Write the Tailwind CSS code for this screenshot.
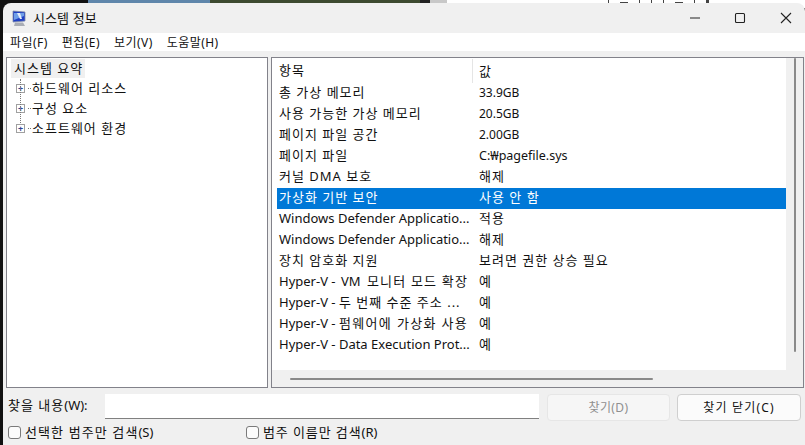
<!DOCTYPE html>
<html lang="ko"><head><meta charset="utf-8">
<script src="https://cdn.jsdelivr.net/npm/@tailwindcss/browser@4"></script>
</head>
<body class="relative w-[805px] h-[445px] overflow-hidden bg-[#111] font-['Noto_Sans','Noto_Sans_CJK_KR',sans-serif] text-[13px] leading-[19px] text-[#111]">
<!-- desktop behind the window -->
<div class="absolute left-0 top-0 w-[805px] h-[8px] flex overflow-hidden">
  <div class="w-[88px] bg-[#111]"></div><div class="w-[122px] bg-[#5f86ab]"></div><div class="w-[210px] bg-[#3d4a30]"></div><div class="w-[10px] bg-[#222]"></div><div class="w-[17px] bg-[#c8c8c8]"></div><div class="flex-1 bg-white"></div>
  <div class="absolute left-[608px] top-0 h-[3px] w-[140px] flex gap-[11px]">
    <i class="w-[1px] bg-[#444]"></i><i class="w-[8px] h-[1px] mt-[2px] bg-[#444]"></i><i class="w-[1px] bg-[#444]"></i><i class="w-[1px] bg-[#444]"></i><i class="w-[1px] bg-[#444]"></i><i class="w-[8px] h-[1px] mt-[2px] bg-[#444]"></i><i class="w-[1px] bg-[#444]"></i><i class="w-[3px] bg-[#444]"></i>
  </div>
</div>
<div class="relative ml-[3px] mt-[3px] h-[442px] w-[802px] rounded-t-[8px] bg-[#f0f0f0] flex flex-col overflow-hidden">
  <!-- title bar -->
  <div class="h-[30px] shrink-0 flex items-center">
    <svg class="ml-[9px] w-[15px] h-[17px]" viewBox="0 0 15 17"><path d="M1 1l12 1v9l-12 1z" fill="#1f3fc4" stroke="#7f8aa8" stroke-width=".8"/><path d="M2 3h10v3l-10 4z" fill="#6f9ee8"/><path d="M5 3l3 6h2l-2-6z" fill="#e4ecfa"/><path d="M3 12.5h8l2 3.5H2z" fill="#a9adb5"/></svg>
    <span class="ml-[6px] tracking-[.1px]">시스템 정보</span>
    <div class="ml-auto flex items-center">
      <svg class="w-[12px] h-[12px] mr-[33px]" viewBox="0 0 12 12"><path d="M1 6h10" stroke="#222" stroke-width="1.2"/></svg>
      <svg class="w-[12px] h-[12px] mr-[34px]" viewBox="0 0 12 12"><rect x="1.5" y="1.5" width="9" height="9" rx="1" fill="none" stroke="#222" stroke-width="1.1"/></svg>
      <svg class="w-[12px] h-[12px] mr-[13px]" viewBox="0 0 12 12"><path d="M1 1l10 10M11 1L1 11" stroke="#222" stroke-width="1.1"/></svg>
    </div>
  </div>
  <!-- menu -->
  <div class="h-[18px] shrink-0 bg-white flex items-center pl-[7px] gap-[14px] text-[12px] tracking-[.45px]">
    <span>파일(F)</span><span>편집(E)</span><span>보기(V)</span><span>도움말(H)</span>
  </div>
  <!-- panes -->
  <div class="mt-[6px] ml-[3px] flex gap-[3px] h-[331px] shrink-0">
    <div class="w-[262px] border border-[#82828a] bg-white relative tracking-[1px]">
      <div class="ml-[4px] mt-[1px] w-[74px] h-[19px] bg-[#f0f0f0] flex items-center pl-[3px] leading-none whitespace-nowrap">시스템 요약</div>
      <div class="flex flex-col">
        <div class="h-[20px] flex items-center"><span class="ml-[9px] w-[9px] h-[9px] border border-[#a0a0a0] text-[#30408f] text-[9px] leading-[7px] text-center font-bold tracking-normal">+</span><span class="ml-[3px] w-[3px] border-t border-dotted border-[#777]"></span><span class="ml-[1px]">하드웨어 리소스</span></div>
        <div class="h-[20px] flex items-center"><span class="ml-[9px] w-[9px] h-[9px] border border-[#a0a0a0] text-[#30408f] text-[9px] leading-[7px] text-center font-bold tracking-normal">+</span><span class="ml-[3px] w-[3px] border-t border-dotted border-[#777]"></span><span class="ml-[1px]">구성 요소</span></div>
        <div class="h-[20px] flex items-center"><span class="ml-[9px] w-[9px] h-[9px] border border-[#a0a0a0] text-[#30408f] text-[9px] leading-[7px] text-center font-bold tracking-normal">+</span><span class="ml-[3px] w-[3px] border-t border-dotted border-[#777]"></span><span class="ml-[1px]">소프트웨어 환경</span></div>
      </div>
      <span class="absolute left-[13px] top-[21px] h-[44px] border-l border-dotted border-[#777]"></span>
    </div>
    <div class="w-[533px] border border-[#82828a] bg-[#f0f0f0] flex flex-col">
      <div class="flex h-[312px]">
        <div class="w-[514px] bg-white pl-[5px]">
          <div class="h-[25px] flex items-center">
            <span class="w-[195px] pl-[2px] tracking-[1px]">항목</span>
            <span class="h-[24px] border-l border-[#e5e5e5] pl-[6px] leading-[24px]">값</span>
          </div>
          <div class="flex flex-col">
            <div class="h-[21px] flex"><span class="w-[202px] pl-[2px] whitespace-nowrap tracking-[1px]">총 가상 메모리</span><span class="text-[12px]">33.9GB</span></div>
            <div class="h-[21px] flex"><span class="w-[202px] pl-[2px] whitespace-nowrap tracking-[1px]">사용 가능한 가상 메모리</span><span class="text-[12px]">20.5GB</span></div>
            <div class="h-[21px] flex"><span class="w-[202px] pl-[2px] whitespace-nowrap tracking-[1px]">페이지 파일 공간</span><span class="text-[12px]">2.00GB</span></div>
            <div class="h-[21px] flex"><span class="w-[202px] pl-[2px] whitespace-nowrap tracking-[1px]">페이지 파일</span><span class="text-[12.5px]">C:₩pagefile.sys</span></div>
            <div class="h-[21px] flex"><span class="w-[202px] pl-[2px] whitespace-nowrap tracking-[1px]">커널 DMA 보호</span><span class="tracking-[1px]">해제</span></div>
            <div class="h-[21px] flex bg-[#0078d7] text-white tracking-[1px]"><span class="w-[202px] pl-[2px] whitespace-nowrap">가상화 기반 보안</span><span>사용 안 함</span></div>
            <div class="h-[21px] flex"><span class="w-[202px] pl-[2px] whitespace-nowrap">Windows Defender Applicatio...</span><span class="tracking-[1px]">적용</span></div>
            <div class="h-[21px] flex"><span class="w-[202px] pl-[2px] whitespace-nowrap">Windows Defender Applicatio...</span><span class="tracking-[1px]">해제</span></div>
            <div class="h-[21px] flex"><span class="w-[202px] pl-[2px] whitespace-nowrap tracking-[1px]">장치 암호화 지원</span><span class="tracking-[1px]">보려면 권한 상승 필요</span></div>
            <div class="h-[21px] flex"><span class="w-[202px] pl-[2px] whitespace-nowrap">Hyper-V - <span class="ml-[2px]">VM</span> <span class="ml-[3px] tracking-[1.2px]">모니터 모드 확장</span></span><span>예</span></div>
            <div class="h-[21px] flex"><span class="w-[202px] pl-[2px] whitespace-nowrap">Hyper-V - <span class="tracking-[1px]">두 번째 수준 주소 ...</span></span><span>예</span></div>
            <div class="h-[21px] flex"><span class="w-[202px] pl-[2px] whitespace-nowrap">Hyper-V - <span class="tracking-[1.35px]">펌웨어에 가상화 사용</span></span><span>예</span></div>
            <div class="h-[21px] flex"><span class="w-[202px] pl-[2px] whitespace-nowrap">Hyper-V - Data Execution Prot...</span><span>예</span></div>
          </div>
        </div>
        <div class="flex-1 flex justify-center"><div class="w-[2px] h-[294px] bg-[#8a8a8a] rounded-full"></div></div>
      </div>
      <div class="flex-1 flex items-center pl-[18px]"><div class="w-[363px] h-[2px] bg-[#8a8a8a] rounded-full"></div></div>
    </div>
  </div>
  <!-- search -->
  <div class="mt-[5px] ml-[5px] flex items-center h-[29px] shrink-0">
    <span class="w-[97px] whitespace-nowrap -mt-[5px]"><span class="tracking-[1px]">찾을 내용</span>(W):</span>
    <div class="w-[434px] h-[25px] -mt-[2px] bg-white border-b border-[#808080]"></div>
    <div class="ml-[8px] w-[123px] h-[27px] rounded-[4px] bg-[#f6f6f6] border border-[#e6e6e6] text-[#8f8f8f] text-[12px] flex items-center justify-center tracking-[.4px]">찾기(D)</div>
    <div class="ml-[7px] w-[124px] h-[27px] rounded-[4px] bg-[#fbfbfb] border border-[#cfcfcf] text-[12px] flex items-center justify-center tracking-[1.2px]">찾기 닫기(C)</div>
  </div>
  <div class="ml-[5px] flex items-center h-[21px] shrink-0">
    <span class="w-[13px] h-[13px] rounded-[3px] border border-[#7a7a7a] bg-[#fbfbfb]"></span>
    <span class="ml-[4px] w-[221px] whitespace-nowrap"><span class="tracking-[1.1px]">선택한 범주만 검색</span>(S)</span>
    <span class="w-[13px] h-[13px] rounded-[3px] border border-[#7a7a7a] bg-[#fbfbfb]"></span>
    <span class="ml-[4px] whitespace-nowrap"><span class="tracking-[.9px]">범주 이름만 검색</span>(R)</span>
  </div>
</div>
</body></html>
